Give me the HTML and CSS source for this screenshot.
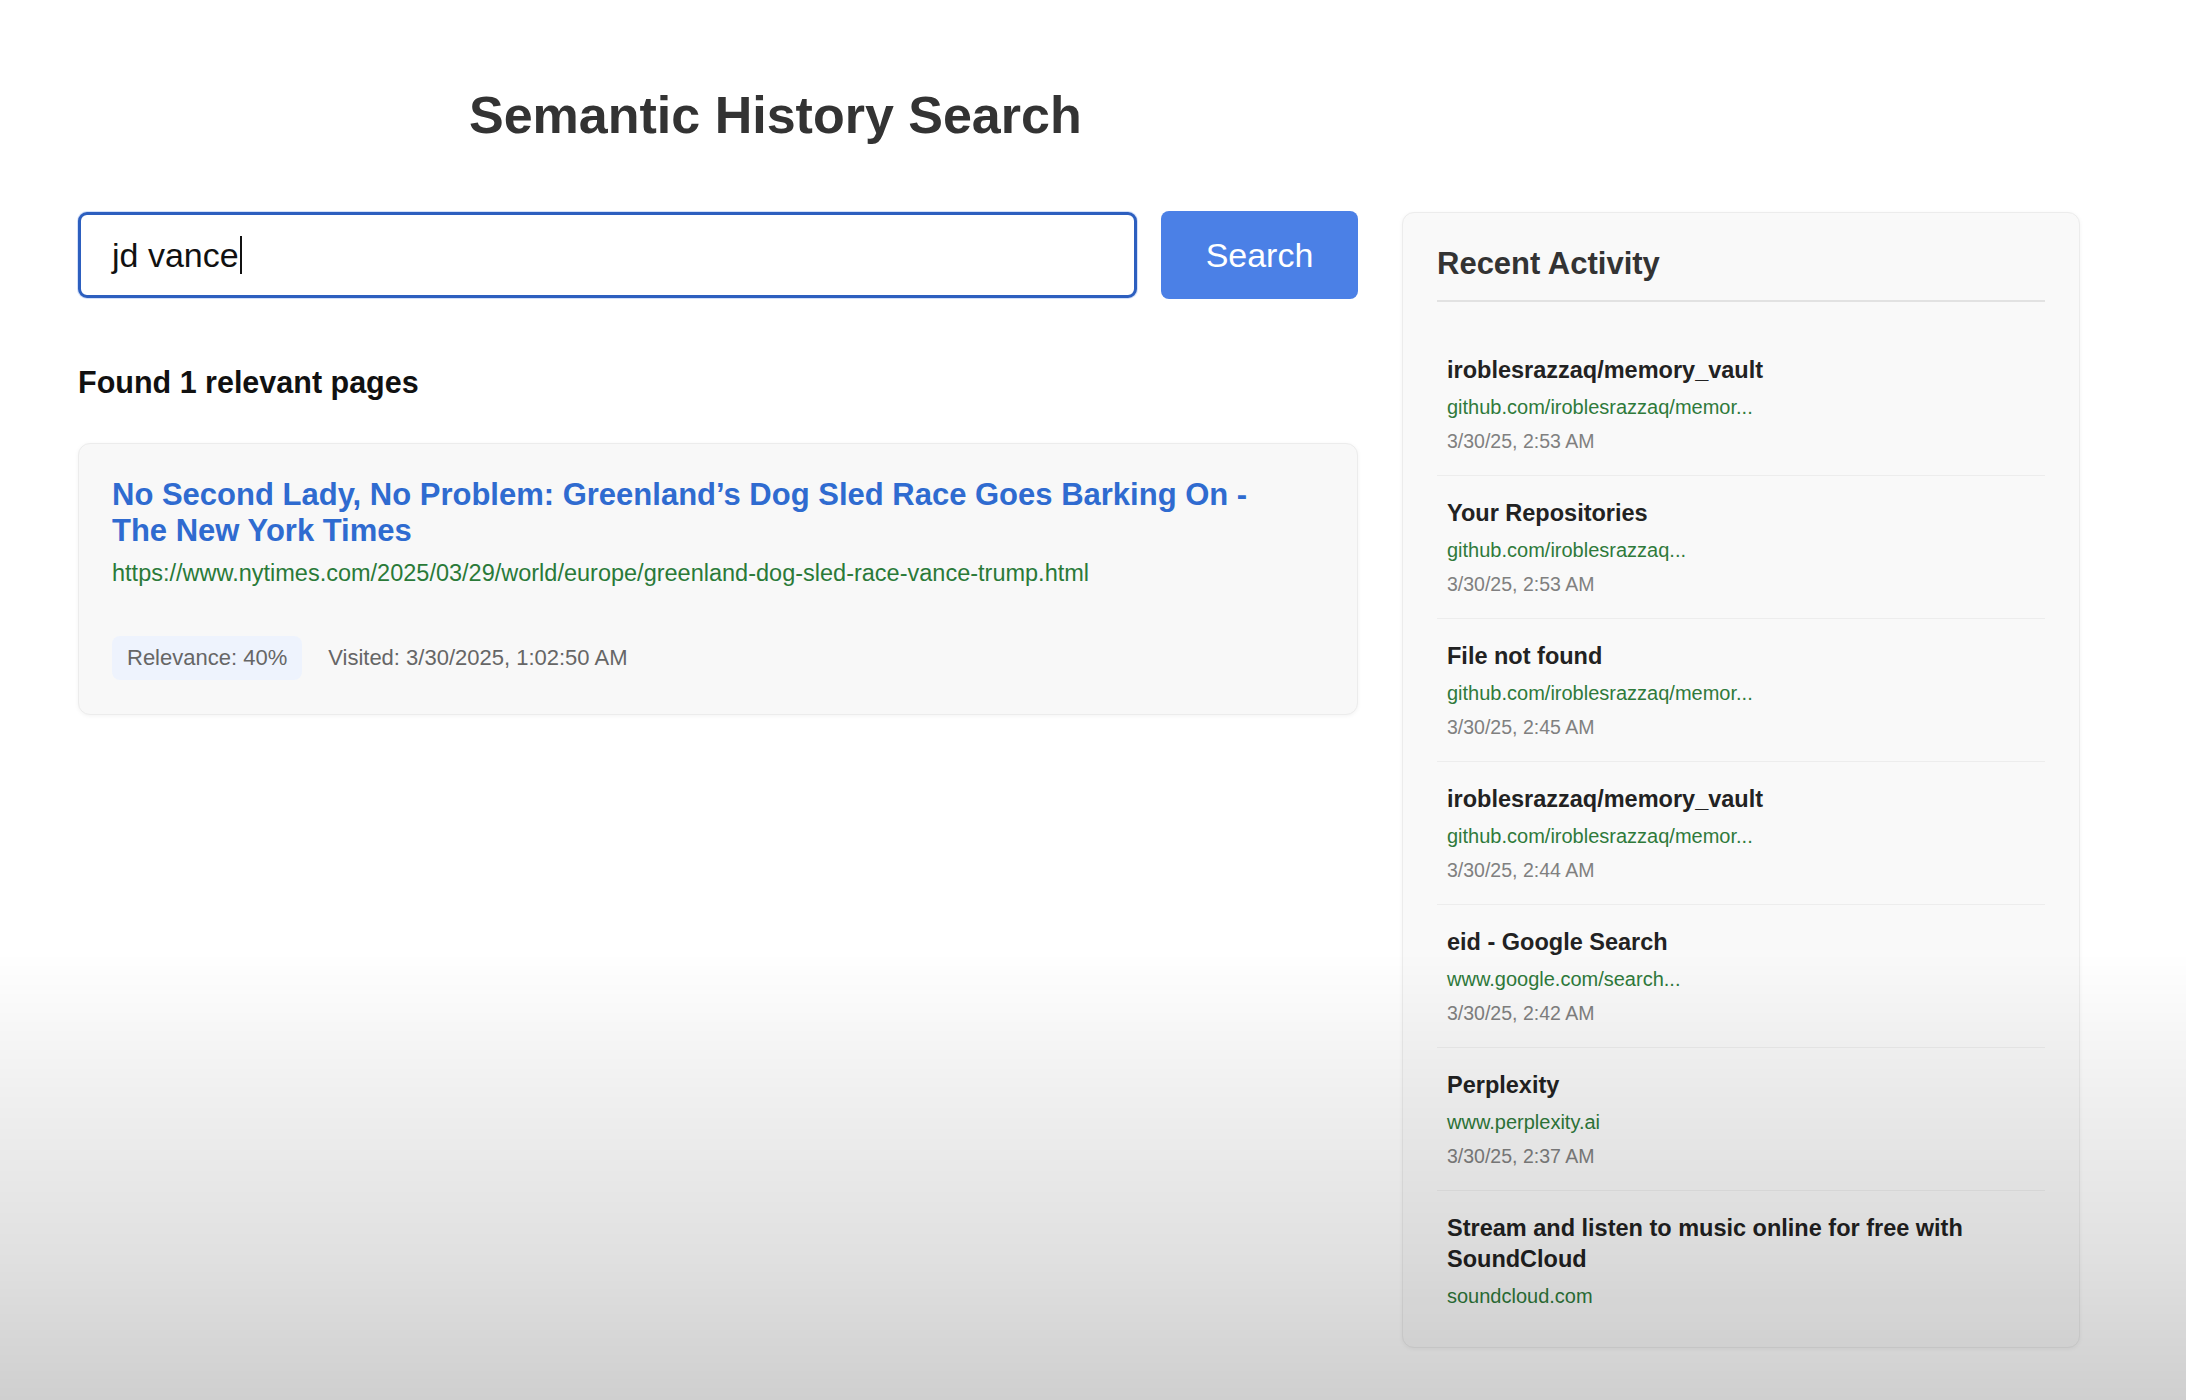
FILE: index.html
```html
<!DOCTYPE html>
<html lang="en">
<head>
<meta charset="utf-8">
<title>Semantic History Search</title>
<link rel="stylesheet" href="styles.css">
</head>
<body>
<div class="page">
  <main class="main">
    <h1 class="title">Semantic History Search</h1>
    <form class="search-row">
      <div class="search-input"><span class="typed">jd vance</span><span class="caret"></span></div>
      <button type="button" class="search-btn">Search</button>
    </form>
    <h2 class="found">Found 1 relevant pages</h2>
    <article class="result">
      <a class="result-title" href="#">No Second Lady, No Problem: Greenland’s Dog Sled Race Goes Barking On - The New York Times</a>
      <div class="result-url">https://www.nytimes.com/2025/03/29/world/europe/greenland-dog-sled-race-vance-trump.html</div>
      <div class="result-meta">
        <span class="badge">Relevance: 40%</span>
        <span class="visited">Visited: 3/30/2025, 1:02:50 AM</span>
      </div>
    </article>
  </main>
  <aside class="sidebar">
    <h3 class="side-title">Recent Activity</h3>
    <div class="activity">
      <div class="item"><div class="item-title">iroblesrazzaq/memory_vault</div><div class="item-url">github.com/iroblesrazzaq/memor...</div><div class="item-date">3/30/25, 2:53 AM</div></div>
      <div class="item"><div class="item-title">Your Repositories</div><div class="item-url">github.com/iroblesrazzaq...</div><div class="item-date">3/30/25, 2:53 AM</div></div>
      <div class="item"><div class="item-title">File not found</div><div class="item-url">github.com/iroblesrazzaq/memor...</div><div class="item-date">3/30/25, 2:45 AM</div></div>
      <div class="item"><div class="item-title">iroblesrazzaq/memory_vault</div><div class="item-url">github.com/iroblesrazzaq/memor...</div><div class="item-date">3/30/25, 2:44 AM</div></div>
      <div class="item"><div class="item-title">eid - Google Search</div><div class="item-url">www.google.com/search...</div><div class="item-date">3/30/25, 2:42 AM</div></div>
      <div class="item"><div class="item-title">Perplexity</div><div class="item-url">www.perplexity.ai</div><div class="item-date">3/30/25, 2:37 AM</div></div>
      <div class="item"><div class="item-title">Stream and listen to music online for free with SoundCloud</div><div class="item-url">soundcloud.com</div></div>
    </div>
  </aside>
</div>
<div class="shade"></div>
</body>
</html>
```

FILE: styles.css
```css
* { box-sizing: border-box; }
html, body { margin: 0; padding: 0; }
body {
  background: #ffffff;
  font-family: "Liberation Sans", Arial, Helvetica, sans-serif;
  color: #222;
  height: 1400px;
  overflow: hidden;
}
.page {
  display: flex;
  align-items: flex-start;
  gap: 44px;
  padding: 0 0 0 78px;
}
.main {
  width: 1280px;
  display: flex;
  flex-direction: column;
}
.title {
  margin: 86px 0 0 391px;
  font-size: 52px;
  line-height: 58px;
  font-weight: 700;
  color: #333;
}
.search-row {
  margin: 67px 0 0 0;
  display: flex;
  align-items: center;
  gap: 24px;
}
.search-input {
  flex: 1;
  height: 86px;
  border: 3px solid #2d5fbf;
  border-radius: 9px;
  background: #fff;
  display: flex;
  align-items: center;
  padding-left: 31px;
  font-size: 34px;
  color: #111;
  box-shadow: 0 0 0 1px #d3e0fa;
}
.caret {
  display: inline-block;
  width: 2px;
  height: 38px;
  background: #111;
  margin-left: 1px;
}
.search-btn {
  width: 197px;
  height: 88px;
  border: none;
  border-radius: 8px;
  background: #4b80e6;
  color: #fff;
  font-family: "Liberation Sans", Arial, Helvetica, sans-serif;
  font-size: 34px;
  padding: 0;
}
.found {
  margin: 65px 0 0 0;
  font-size: 30.5px;
  line-height: 36px;
  font-weight: 700;
  color: #111;
}
.result {
  margin-top: 43px;
  background: #f8f8f8;
  border: 1px solid #ececec;
  border-radius: 12px;
  box-shadow: 0 1px 4px rgba(0,0,0,0.05);
  padding: 33px 60px 34px 33px;
}
.result-title {
  display: block;
  font-size: 31px;
  line-height: 36px;
  font-weight: 700;
  color: #2f6bd0;
  text-decoration: none;
}
.result-url {
  margin-top: 9px;
  font-size: 23.5px;
  line-height: 30px;
  color: #2a7a38;
}
.result-meta {
  margin-top: 48px;
  display: flex;
  align-items: center;
  gap: 26px;
}
.badge {
  background: #eef3fd;
  border-radius: 8px;
  padding: 9px 15px;
  font-size: 22px;
  line-height: 26px;
  color: #666;
}
.visited {
  font-size: 22px;
  line-height: 26px;
  color: #666;
}
.sidebar {
  margin-top: 212px;
  width: 678px;
  height: 1136px;
  background: #f9f9f9;
  border: 1px solid #ececec;
  border-radius: 12px;
  box-shadow: 0 1px 4px rgba(0,0,0,0.05);
  padding: 31px 34px 30px 34px;
  display: flex;
  flex-direction: column;
}
.side-title {
  margin: 0;
  font-size: 31px;
  line-height: 40px;
  font-weight: 700;
  color: #333;
  padding-bottom: 16px;
  border-bottom: 2px solid #e2e2e2;
}
.activity {
  margin-top: 31px;
  flex: 1;
  overflow: hidden;
}
.item {
  padding: 22px 10px 17px 10px;
  border-bottom: 1px solid #ededed;
}
.item:last-child {
  border-bottom: none;
}
.item-title {
  font-size: 23.5px;
  line-height: 31px;
  font-weight: 700;
  color: #222;
}
.item-url {
  margin-top: 4px;
  font-size: 20px;
  line-height: 34px;
  color: #2f7a3b;
}
.item-date {
  font-size: 19.5px;
  line-height: 34px;
  color: #808080;
}
.shade {
  position: fixed;
  left: 0; top: 0; right: 0; bottom: 0;
  pointer-events: none;
  background: linear-gradient(to bottom, rgba(0,0,0,0) 0%, rgba(0,0,0,0) 68%, rgba(0,0,0,0.06) 78%, rgba(0,0,0,0.12) 90%, rgba(0,0,0,0.19) 100%);
}
```
